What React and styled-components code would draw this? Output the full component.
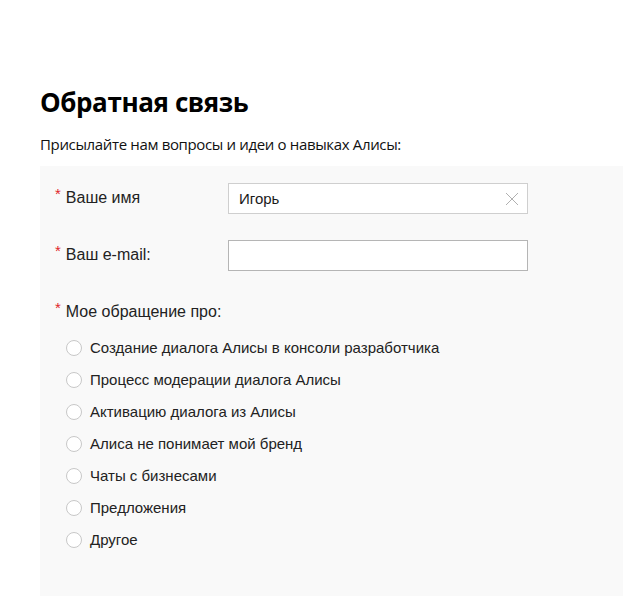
import React from "react";
import styled, { createGlobalStyle } from "styled-components";

const GlobalStyle = createGlobalStyle`
  html, body {
    margin: 0;
    padding: 0;
    background: #ffffff;
  }
  #root {
    min-height: 100vh;
  }
`;

const Page = styled.div`
  min-height: 100vh;
  display: flex;
  flex-direction: column;
  padding: 84px 0 0 40px;
  box-sizing: border-box;
  color: #000;
`;

const Title = styled.h1`
  margin: 0;
  font-family: "Open Sans", sans-serif;
  font-weight: 700;
  font-size: 26px;
  line-height: 36px;
  letter-spacing: -0.4px;
`;

const Subtitle = styled.p`
  margin: 14px 0 0;
  font-family: "Open Sans", sans-serif;
  font-size: 15px;
  line-height: 20px;
  letter-spacing: -0.35px;
  color: #111;
`;

const Panel = styled.form`
  flex: 1;
  margin-top: 12px;
  background: #f9f9f9;
  padding: 17px 0 40px 15px;
  font-family: "Liberation Sans", Arial, sans-serif;
  font-size: 15px;
  color: #222;
`;

const Row = styled.div`
  display: grid;
  grid-template-columns: 173px 300px;
  align-items: center;
  margin-bottom: ${(p) => p.$gap || 26}px;
`;

const Label = styled.label`
  display: flex;
  align-items: flex-start;
  font-size: 16px;
  line-height: 20px;
  margin-top: ${(p) => p.$offset || 0}px;
`;

const Star = styled.span`
  color: #e0262a;
  font-size: 15px;
  line-height: 15px;
  margin-right: 5px;
  margin-top: -2px;
`;

const InputBox = styled.div`
  position: relative;
  height: 31px;
  box-sizing: border-box;
  border: 1px solid ${(p) => p.$border};
  background: #fff;
  display: flex;
  align-items: center;
  padding: 0 10px;
`;

const InputText = styled.span`
  font-size: 15px;
  color: #1a1a1a;
`;

const ClearIcon = styled.svg`
  position: absolute;
  right: 8px;
  top: 8px;
`;

const Options = styled.div`
  display: flex;
  flex-direction: column;
  gap: 12px;
  margin-top: 16px;
  padding-left: 11px;
`;

const Option = styled.label`
  display: flex;
  align-items: center;
  gap: 8px;
  line-height: 20px;
`;

const Radio = styled.span`
  width: 16px;
  height: 16px;
  box-sizing: border-box;
  border: 1px solid #c8c8c8;
  border-radius: 50%;
  background: #fff;
  flex-shrink: 0;
`;

const options = [
  "Создание диалога Алисы в консоли разработчика",
  "Процесс модерации диалога Алисы",
  "Активацию диалога из Алисы",
  "Алиса не понимает мой бренд",
  "Чаты с бизнесами",
  "Предложения",
  "Другое",
];

export default function App() {
  return (
    <>
      <GlobalStyle />
      <Page>
        <Title>Обратная связь</Title>
        <Subtitle>Присылайте нам вопросы и идеи о навыках Алисы:</Subtitle>
        <Panel>
          <Row>
            <Label $offset={-2}>
              <Star>*</Star>Ваше имя
            </Label>
            <InputBox $border="#cfcfcf">
              <InputText>Игорь</InputText>
              <ClearIcon width="14" height="14" viewBox="0 0 14 14">
                <path d="M1 1 L13 13 M13 1 L1 13" stroke="#b0b0b0" strokeWidth="1" fill="none" />
              </ClearIcon>
            </InputBox>
          </Row>
          <Row $gap={31}>
            <Label $offset={-2}>
              <Star>*</Star>Ваш e-mail:
            </Label>
            <InputBox $border="#b5b5b5" />
          </Row>
          <Label>
            <Star>*</Star>Мое обращение про:
          </Label>
          <Options>
            {options.map((o) => (
              <Option key={o}>
                <Radio />
                {o}
              </Option>
            ))}
          </Options>
        </Panel>
      </Page>
    </>
  );
}
